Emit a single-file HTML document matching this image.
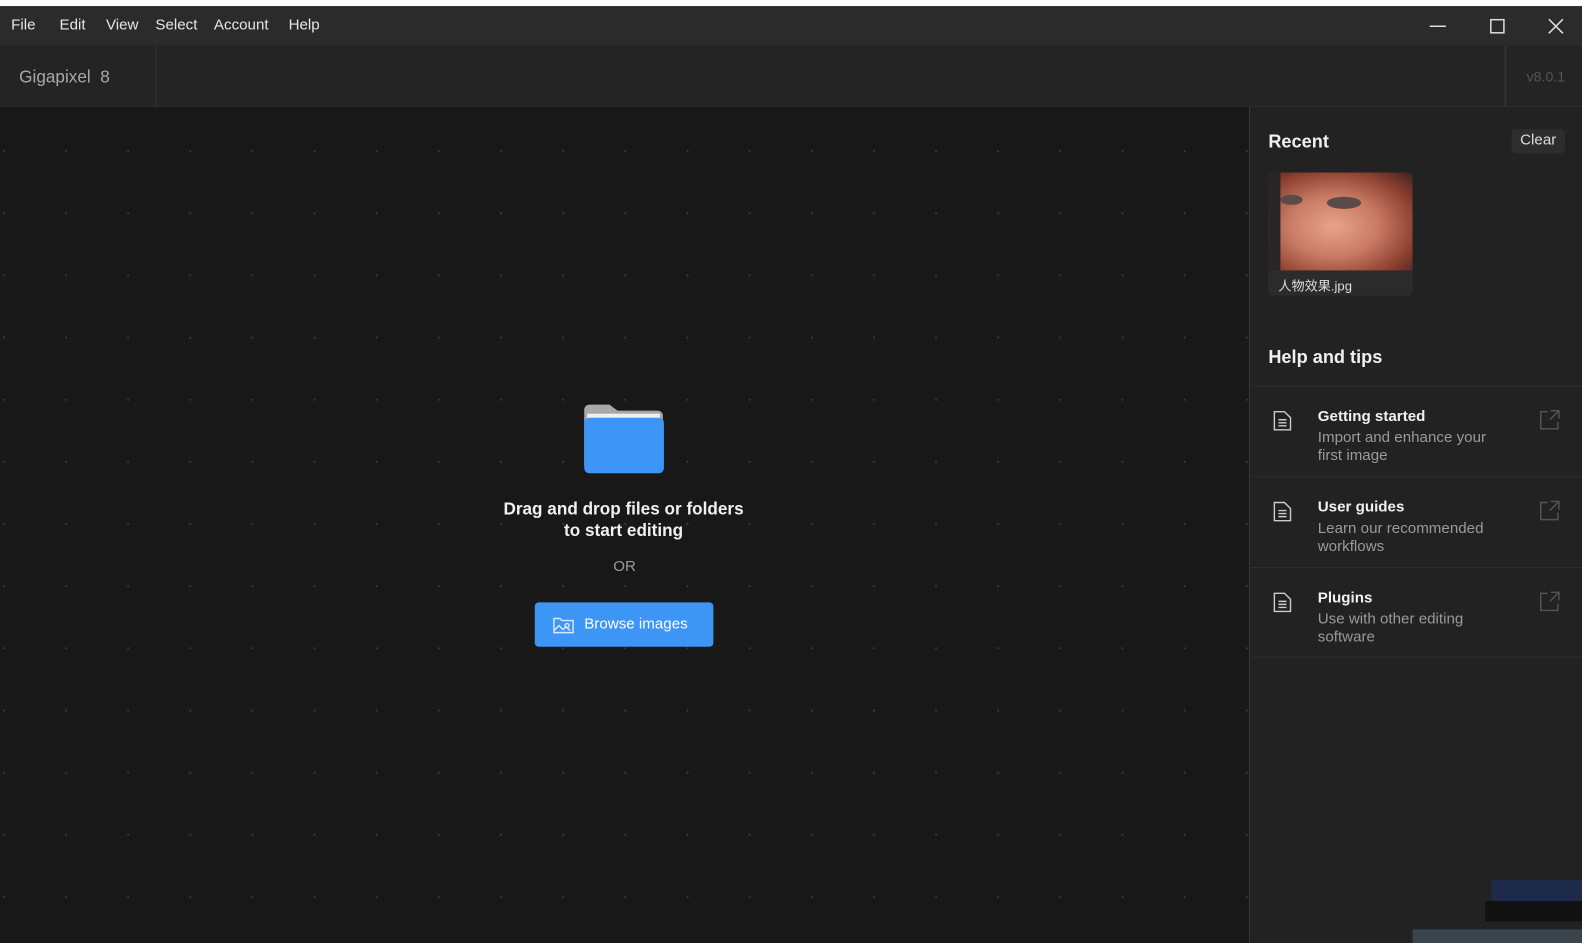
<!DOCTYPE html>
<html><head><meta charset="utf-8"><style>
*{margin:0;padding:0;box-sizing:border-box}
body{width:1582px;height:935px;background:#fff;font-family:"Liberation Sans","Noto Sans CJK SC",sans-serif;overflow:hidden;position:relative}
#wrap{position:absolute;left:0;top:0;width:1568px;height:927px;transform:scale(1.009);transform-origin:0 0}
#menu{position:absolute;top:6px;left:0;width:1568px;height:40px;background:#2b2b2b;border-bottom:1px solid #1c1c1c;color:#e6e6e6;font-size:15px}
#menu span{position:absolute;top:10px}
#hdr{position:absolute;top:45px;left:0;width:1568px;height:61px;background:#242424}
#main{position:absolute;top:106px;left:0;width:1238px;height:829px;background:#181818;
background-image:radial-gradient(circle,#3a3a3a 0.9px,transparent 1.2px);background-size:61.6px 61.6px;background-position:-27px 13px}
#side{position:absolute;top:106px;left:1238px;width:344px;height:829px;background:#222}
.t{position:absolute;color:#f0f0f0}
.item{position:absolute;left:1238px;width:344px;height:90px;border-top:1px solid #2e2e2e}
.item .h{position:absolute;left:68px;top:21px;font-size:15px;color:#f0f0f0;font-weight:bold}
.item .d{position:absolute;left:68px;top:42px;font-size:15px;color:#9a9a9a;line-height:18px;width:185px}
.item svg{position:absolute}
</style></head><body><div id="wrap">
<div id="menu">
<span style="left:11px">File</span><span style="left:59px">Edit</span><span style="left:105px">View</span><span style="left:154px">Select</span><span style="left:212px">Account</span><span style="left:286px">Help</span>
<svg style="position:absolute;left:1416px;top:8px" width="140" height="24"><line x1="1" y1="12" x2="17" y2="12" stroke="#ddd" stroke-width="1.5"/><rect x="61.5" y="5.5" width="13" height="13" fill="none" stroke="#ddd" stroke-width="1.5"/><path d="M119 5L133 19M133 5L119 19" stroke="#ddd" stroke-width="1.5"/></svg>
</div>
<div id="hdr">
<div style="position:absolute;left:19px;top:22px;font-size:17px;color:#a8a8a8">Gigapixel&nbsp;&nbsp;8</div>
<div style="position:absolute;left:154px;top:0;width:1px;height:61px;background:#333"></div>
<div style="position:absolute;left:1491px;top:0;width:2px;height:61px;background:#333"></div>
<div style="position:absolute;left:1513px;top:23px;font-size:14px;color:#555">v8.0.1</div>
</div>
<div id="main"></div>
<div id="side"></div>
<svg style="position:absolute;left:578px;top:400px" width="82" height="72"><path d="M1 6a5 5 0 0 1 5-5h20l8 6h40a5 5 0 0 1 5 5v50H1z" fill="#a8a8a8"/><rect x="4" y="10" width="72" height="30" fill="#f0f0f0"/><rect x="1" y="14" width="79" height="55" rx="5" fill="#3d95f5"/></svg>
<div class="t" style="left:440px;top:494px;width:356px;text-align:center;font-size:17px;font-weight:bold;line-height:21px">Drag and drop files or folders<br>to start editing</div>
<div class="t" style="left:580px;top:553px;width:78px;text-align:center;font-size:15px;color:#9a9a9a">OR</div>
<div style="position:absolute;left:530px;top:597px;width:177px;height:44px;background:#3d95f5;border-radius:4px;color:#fff;font-size:15px">
<svg style="position:absolute;left:18px;top:13px" width="22" height="18" fill="none" stroke="#dbe9ff" stroke-width="1.4"><path d="M1 3h6l2 2h11v12H1z"/><path d="M1 15l5-5 4 4 3-3 4 4"/><circle cx="14" cy="10" r="2"/></svg>
<span style="position:absolute;left:49px;top:13px">Browse images</span></div>
<div class="t" style="left:1257px;top:130px;font-size:18px;font-weight:bold">Recent</div>
<div style="position:absolute;left:1498px;top:128px;width:53px;height:24px;background:#2d2d2d;border-radius:4px;color:#ddd;font-size:15px;text-align:center;line-height:22px">Clear</div>
<div style="position:absolute;left:1257px;top:171px;width:143px;height:122px;background:#2b2b2b;border-radius:4px;overflow:hidden">
<div style="position:absolute;left:0;top:0;width:143px;height:97px;background:radial-gradient(ellipse at 45% 55%,#e8a48a 0%,#c97a64 40%,#8a3e2e 75%,#3a2422 100%)"></div>
<div style="position:absolute;left:0;top:0;width:12px;height:97px;background:#2a2426"></div>
<div style="position:absolute;left:12px;top:22px;width:22px;height:10px;border-radius:50%;background:#5a4a48"></div>
<div style="position:absolute;left:58px;top:24px;width:34px;height:12px;border-radius:50%;background:#5a4a48"></div>
<div style="position:absolute;left:10px;top:102px;font-size:13px;color:#ddd">人物效果.jpg</div></div>
<div class="t" style="left:1257px;top:344px;font-size:18px;font-weight:bold">Help and tips</div>
<div class="item" style="top:382px"><svg style="left:23px;top:23px" width="20" height="22" fill="none" stroke="#ccc" stroke-width="1.4"><path d="M2 2h10l6 6v12H2z"/><path d="M6 10h8M6 13h8M6 16h8"/></svg><div class="h">Getting started</div><div class="d">Import and enhance your first image</div><svg style="left:288px;top:23px" width="20" height="20" fill="none" stroke="#555" stroke-width="1.4"><path d="M8 2H1v17h17v-7M11 1h8v8M19 1l-9 9"/></svg></div>
<div class="item" style="top:472px"><svg style="left:23px;top:23px" width="20" height="22" fill="none" stroke="#ccc" stroke-width="1.4"><path d="M2 2h10l6 6v12H2z"/><path d="M6 10h8M6 13h8M6 16h8"/></svg><div class="h">User guides</div><div class="d">Learn our recommended workflows</div><svg style="left:288px;top:23px" width="20" height="20" fill="none" stroke="#555" stroke-width="1.4"><path d="M8 2H1v17h17v-7M11 1h8v8M19 1l-9 9"/></svg></div>
<div class="item" style="top:562px;border-bottom:1px solid #2e2e2e"><svg style="left:23px;top:23px" width="20" height="22" fill="none" stroke="#ccc" stroke-width="1.4"><path d="M2 2h10l6 6v12H2z"/><path d="M6 10h8M6 13h8M6 16h8"/></svg><div class="h">Plugins</div><div class="d">Use with other editing software</div><svg style="left:288px;top:23px" width="20" height="20" fill="none" stroke="#555" stroke-width="1.4"><path d="M8 2H1v17h17v-7M11 1h8v8M19 1l-9 9"/></svg></div>
<div style="position:absolute;left:1478px;top:872px;width:90px;height:22px;background:#1e2a4a"></div>
<div style="position:absolute;left:1472px;top:893px;width:96px;height:20px;background:#111"></div>
<div style="position:absolute;left:1400px;top:921px;width:168px;height:14px;background:#3a444c"></div>
</div></body></html>
